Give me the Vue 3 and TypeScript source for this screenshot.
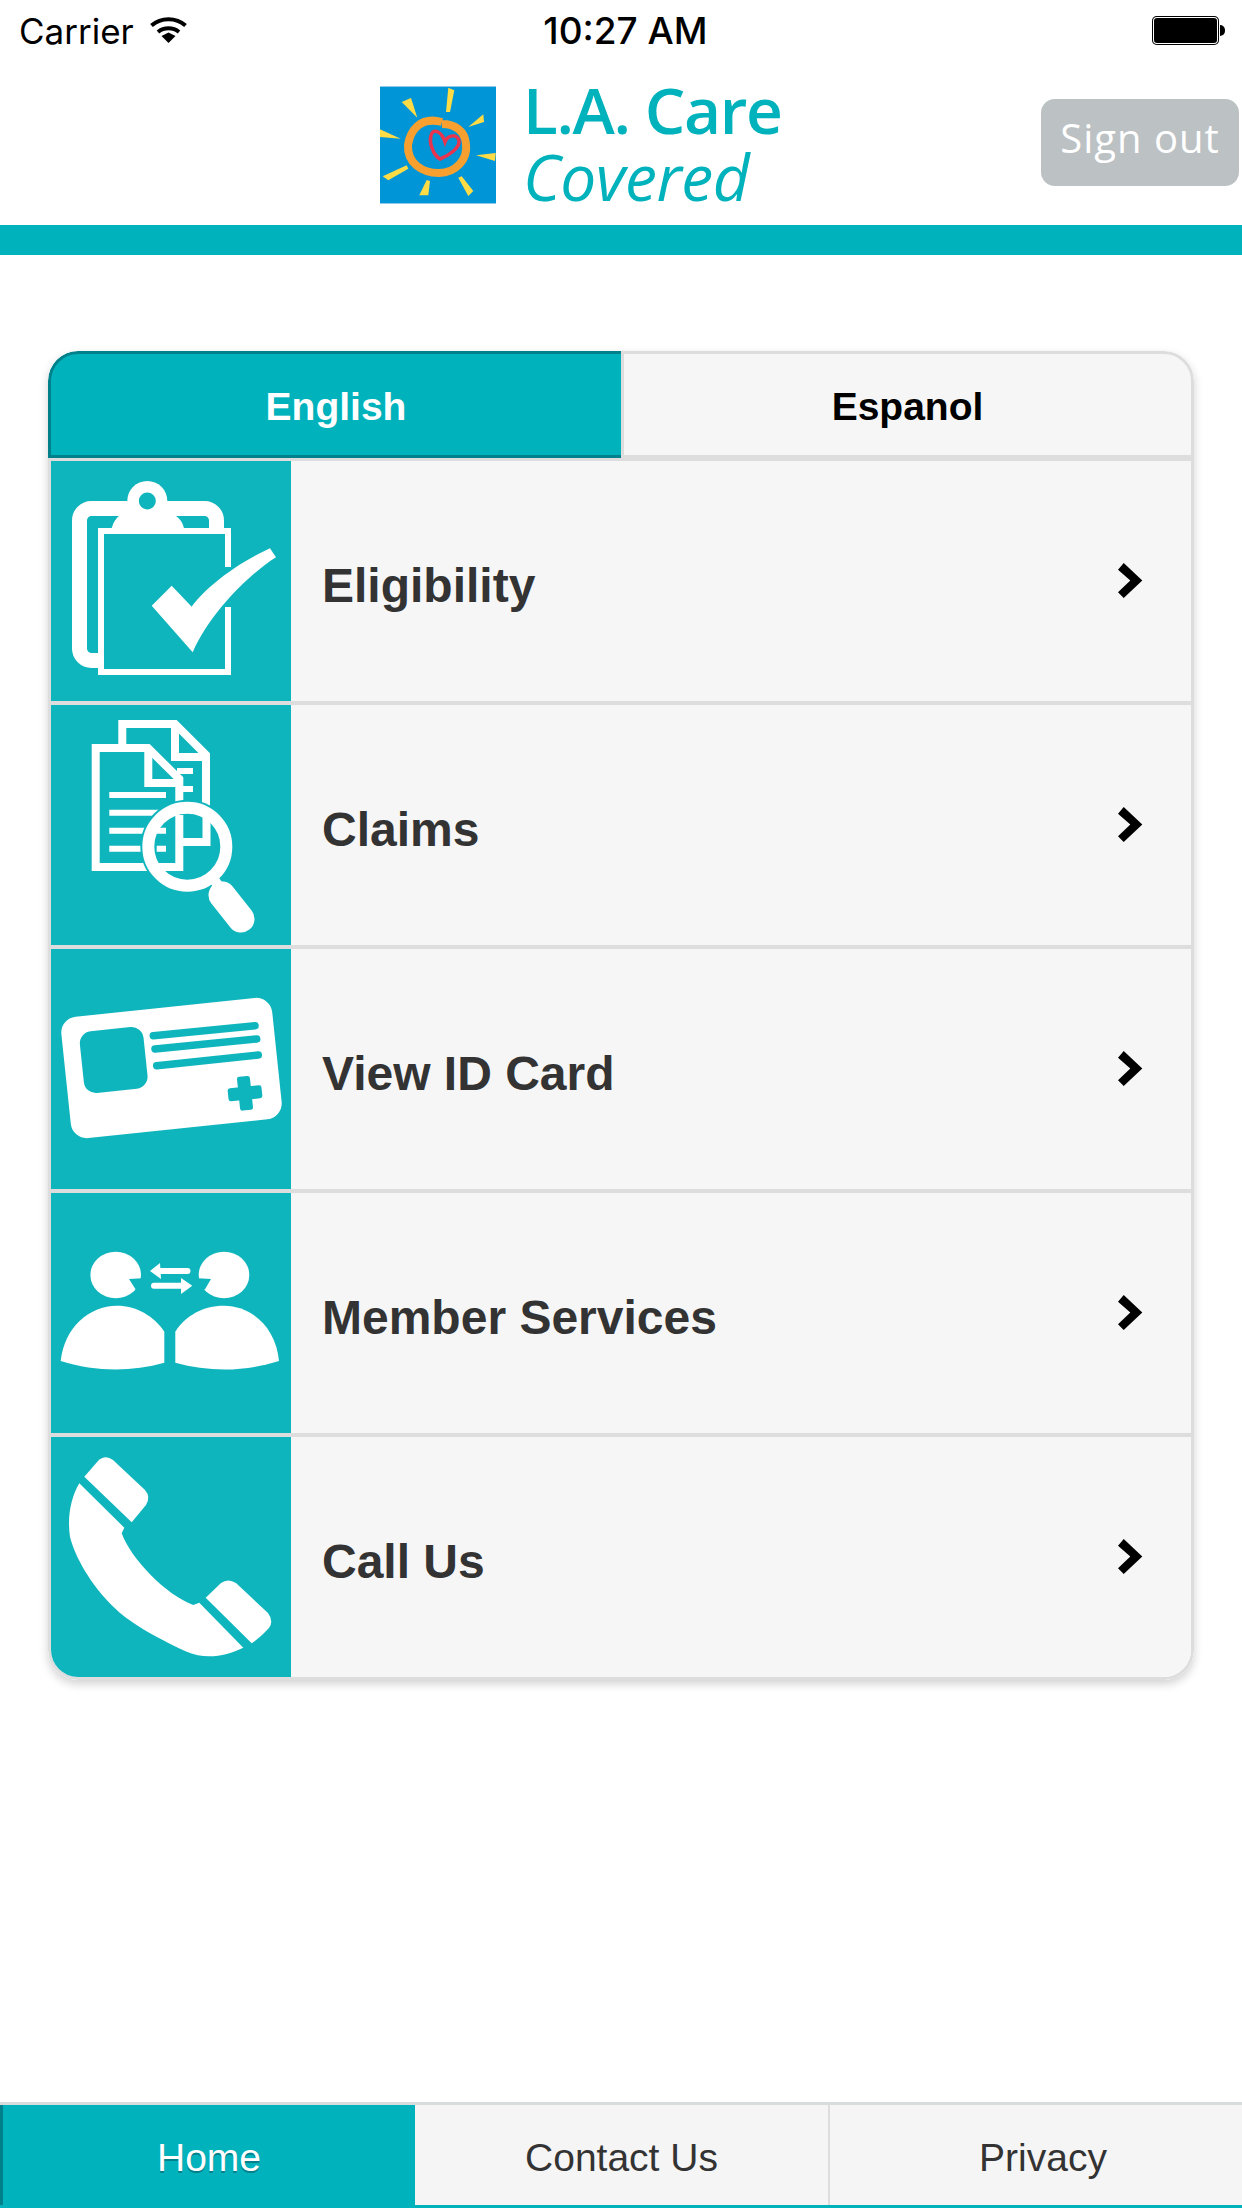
<script setup lang="ts">
interface Row { key: string; label: string }
const rows: Row[] = [
  { key: 'eligibility', label: 'Eligibility' },
  { key: 'claims', label: 'Claims' },
  { key: 'card', label: 'View ID Card' },
  { key: 'member', label: 'Member Services' },
  { key: 'call', label: 'Call Us' },
]
const rays: string[] = [
  '68.3,1.7 74.3,4.3 70,26 66,26',
  '21.7,16 31,12 37.3,31.7',
  '88.3,41 103.3,28.3 104,36',
  '0,43.3 20.7,52.7 0,51',
  '96,69.3 115.7,67 115,75',
  '2.7,90.3 26.7,79.3 28.3,82.7 8.3,94.3',
  '39.3,109.3 46.7,94 50,95 48.3,109.3',
  '78.3,91.7 81.7,90.3 93.3,105 88.3,110',
]
const tabs: string[] = ['Home', 'Contact Us', 'Privacy']
</script>

<template>
  <div class="page">
    <div class="status">
      <div class="status-left">
        <span class="carrier">Carrier</span>
        <svg class="wifi" width="37" height="26" viewBox="0 0 37 26">
          <path d="M1.5 8.5 C11 0 26 0 35.5 8.5" fill="none" stroke="#000" stroke-width="4" />
          <path d="M8 15 C14 10 23 10 29 15" fill="none" stroke="#000" stroke-width="4" />
          <polygon points="11.5,19 18.5,15.5 25.5,19 18.5,26" fill="#000" />
        </svg>
      </div>
      <span class="time">10:27 AM</span>
      <div class="status-right">
        <div class="battery"></div>
        <div class="nub"></div>
      </div>
    </div>

    <header class="header">
      <div class="logo">
        <svg class="sun" width="116" height="118" viewBox="0 0 116 118">
          <rect width="116" height="118" fill="#0095d6" />
          <rect width="116" height="1" fill="#8ccbec" />
          <rect y="117" width="116" height="1" fill="#8ccbec" />
          <polygon v-for="r in rays" :key="r" :points="r" fill="#ffdc45" />
          <path d="M62 36 C40 30 30 45 28 59 C27 77 42 87 59 87 C76 87 88 73 86 58 C85 45 75 38 62 38" fill="none" stroke="#f7a030" stroke-width="8" />
          <path d="M58 46 C50 42 49 55 52 62 C54 68 58 72 60 73 C68 70 80 62 79 55 C78 48 68 48 65 56 C63 50 60 47 58 46 Z" fill="none" stroke="#e8344f" stroke-width="3.5" />
        </svg>
        <div class="logo-text">
          <span class="la">L.A. Care</span>
          <span class="covered">Covered</span>
        </div>
      </div>
      <button class="signout">Sign out</button>
    </header>
    <div class="teal-bar"></div>

    <main class="card">
      <div class="lang">
        <div class="lang-tab active">English</div>
        <div class="lang-tab">Espanol</div>
      </div>
      <div class="list">
        <div v-for="row in rows" :key="row.key" class="row">
          <div class="icon">
            <svg width="240" height="240" viewBox="0 0 240 240">
              <g v-if="row.key === 'eligibility'">
                <rect x="28.5" y="47.5" width="137" height="152" rx="12" fill="none" stroke="#fff" stroke-width="15" />
                <circle cx="96.3" cy="40" r="20" fill="#fff" />
                <path d="M60.7 67 Q63 59 68 55 H125 Q131 59 133 67 Z" fill="#fff" />
                <circle cx="96.3" cy="40" r="8.5" fill="#0fb5bd" />
                <rect x="50" y="70" width="127" height="141" fill="#0fb5bd" stroke="#fff" stroke-width="6" />
                <rect x="172" y="106" width="12" height="40" fill="#0fb5bd" />
                <path d="M100.7 144.7 L120.7 124.7 L140.7 145.7 C152 130 180 105 219 87.3 L225 96.3 C200 112 160 150 141.7 191.3 Z" fill="#fff" />
              </g>
              <g v-else-if="row.key === 'claims'">
                <path d="M71.3 40 V19 H124 L155 50 V137 H132" fill="none" stroke="#fff" stroke-width="8" />
                <path d="M124 22 V52 H155" fill="none" stroke="#fff" stroke-width="8" />
                <path d="M126 66 H142 M132 84 H142" stroke="#fff" stroke-width="6" />
                <path d="M44.7 43 H97 L128.3 74 V162 H44.7 Z" fill="#0fb5bd" stroke="#fff" stroke-width="8" />
                <path d="M97.3 46 V78 H126" fill="none" stroke="#fff" stroke-width="8" />
                <path d="M58.3 90 H115 M58.3 107.7 H115 M58.3 125.7 H115 M58.3 143.7 H115" stroke="#fff" stroke-width="6" />
                <circle cx="136.3" cy="141.7" r="47" fill="#0fb5bd" />
                <path d="M128.3 110 V166 M108 162 H128" fill="none" stroke="#fff" stroke-width="8" />
                <path d="M155.5 110 V137 H132" fill="none" stroke="#fff" stroke-width="8" />
                <path d="M105.7 125.7 H115 M105.7 143.7 H115" stroke="#fff" stroke-width="6" />
                <circle cx="136.3" cy="141.7" r="39" fill="none" stroke="#fff" stroke-width="12" />
                <path d="M164 176 L172 187" stroke="#fff" stroke-width="10" />
                <path d="M171 190 L190 214" stroke="#fff" stroke-width="27" stroke-linecap="round" />
              </g>
              <g v-else-if="row.key === 'card'">
                <g transform="translate(120.5 119) rotate(-6)">
                  <rect x="-106" y="-61" width="212" height="122" rx="16" fill="#fff" />
                </g>
                <g transform="translate(62.7 111) rotate(-6)">
                  <rect x="-32" y="-31" width="64" height="62" rx="12" fill="#0fb5bd" />
                </g>
                <path d="M102.3 86.7 L204 76.7 M104 100 L205.7 90 M105.7 116.7 L207.3 106" stroke="#0fb5bd" stroke-width="7.5" stroke-linecap="round" />
                <g transform="translate(194 144.3) rotate(-6)" fill="#0fb5bd">
                  <rect x="-6.5" y="-17" width="13" height="34" rx="2.5" />
                  <rect x="-17" y="-6.5" width="34" height="13" rx="2.5" />
                </g>
              </g>
              <g v-else-if="row.key === 'member'">
                <ellipse cx="64.7" cy="82" rx="25.3" ry="23.3" fill="#fff" />
                <polygon points="78,86 95,85 95,100 85,97" fill="#0fb5bd" />
                <ellipse cx="173" cy="82" rx="25.3" ry="23.3" fill="#fff" />
                <polygon points="160,86 143,85 143,100 154,96.3" fill="#0fb5bd" />
                <path d="M9.7 168 C13 135 38 112.7 66 112.7 C85 112.7 103 123 113.3 138.7 V169.7 C80 179 45 179 9.7 168 Z" fill="#fff" />
                <path d="M124.3 138.7 C134 123 152 112.7 173 112.7 C201 112.7 225 135 228 168 C193 179 158 179 124.3 169.7 Z" fill="#fff" />
                <path d="M108 78 H136.5 M103 92.7 H132" stroke="#fff" stroke-width="6" stroke-linecap="round" />
                <polygon points="99,78 109,70 110,86" fill="#fff" />
                <polygon points="141.3,92.7 130,85 130,101" fill="#fff" />
              </g>
              <g v-else>
                <path d="M33.3 39.7 L47 24 Q54 17 62 23 L94 53 Q100 60 95 68 L80.7 85.3 Z" fill="#fff" />
                <path d="M154.7 160.7 L170 146 Q177 141 185 146 L217 176 Q223 184 218 191 Q210 200 200.7 206.3 Z" fill="#fff" />
                <path d="M28.3 46.3 L73.3 90.7 L70.7 96.3 C80 122 115 158 142.3 168 L148.3 165.7 L192.3 210.7 C175 219 155 223 135.7 214.7 C100 198 78 185 62.3 169.7 C40 148 24 120 19 100 C16 80 20 60 28.3 46.3 Z" fill="#fff" />
              </g>
            </svg>
          </div>
          <span class="label">{{ row.label }}</span>
          <svg class="chev" width="25" height="36" viewBox="0 0 25 36">
            <polygon points="5.7,0 24.3,17.5 5.7,35 0,29.3 12.3,17.5 0,6.7" fill="#000" />
          </svg>
        </div>
      </div>
    </main>

    <nav class="footer">
      <div v-for="(t, i) in tabs" :key="t" class="foot-tab" :class="{ on: i === 0 }">{{ t }}</div>
    </nav>
  </div>
</template>

<style>
html, body { margin: 0; background: #fff; }
</style>

<style scoped>
.page {
  width: 1242px;
  height: 2208px;
  display: flex;
  flex-direction: column;
  background: #fff;
  font-family: "Liberation Sans", Arial, sans-serif;
  overflow: hidden;
}
.status {
  height: 60px;
  display: grid;
  grid-template-columns: 1fr auto 1fr;
  align-items: center;
  padding: 2px 17px 0 19px;
  box-sizing: border-box;
  font-family: Inter, "Liberation Sans", sans-serif;
  color: #000;
}
.status-left { display: flex; align-items: center; gap: 16px; }
.carrier { font-size: 35px; line-height: 58px; }
.wifi { display: block; margin-top: -3px; }
.time { font-size: 37px; font-weight: 500; line-height: 58px; margin-left: 7px; }
.status-right { display: flex; align-items: center; justify-content: flex-end; margin-top: -2px; }
.battery {
  width: 67px;
  height: 29px;
  box-sizing: border-box;
  background: #000;
  border-radius: 5px;
  box-shadow: inset 0 0 0 1px #000, inset 0 0 0 2px #fff;
}
.nub {
  width: 5px;
  height: 11px;
  margin-left: 1px;
  background: #000;
  border-radius: 0 6px 6px 0;
}
.header {
  height: 165px;
  display: flex;
  align-items: flex-start;
  justify-content: space-between;
  padding: 0 3px 0 380px;
  box-sizing: border-box;
}
.logo { display: flex; gap: 27px; margin-top: 26px; }
.sun { display: block; }
.logo-text {
  display: flex;
  flex-direction: column;
  font-family: "Open Sans", sans-serif;
  color: #00b2bb;
}
.la {
  font-size: 64px;
  font-weight: 600;
  letter-spacing: -1.4px;
  line-height: 62px;
  margin-top: -7px;
  white-space: nowrap;
}
.covered {
  font-size: 64px;
  font-style: italic;
  letter-spacing: -0.4px;
  line-height: 66px;
  margin-top: 3px;
  white-space: nowrap;
}
.signout {
  width: 198px;
  height: 87px;
  margin-top: 39px;
  padding: 0 0 10px;
  border: none;
  border-radius: 14px;
  background: #bcc1c4;
  color: #fff;
  font-family: "Open Sans", sans-serif;
  font-size: 40px;
  letter-spacing: 1px;
}
.teal-bar { height: 30px; background: #00b2bb; flex: none; }
.card {
  margin: 96px 48px 0;
  border-radius: 30px;
  overflow: hidden;
  box-shadow: 0 4px 10px rgba(0, 0, 0, 0.18);
  flex: none;
}
.lang { display: grid; grid-template-columns: 1fr 1fr; height: 107px; }
.lang-tab {
  display: flex;
  align-items: center;
  justify-content: center;
  box-sizing: border-box;
  border: 3px solid #ddd;
  padding-top: 4px;
  background: #f6f6f6;
  color: #000;
  font-size: 39px;
  font-weight: 700;
  border-top-right-radius: 30px;
}
.lang-tab.active {
  border: 3px solid #00808a;
  border-right: none;
  background: #00b2bb;
  color: #fff;
  border-radius: 30px 0 0 0;
}
.list {
  border: 3px solid #ddd;
  border-bottom-left-radius: 30px;
  border-bottom-right-radius: 30px;
  overflow: hidden;
}
.row {
  height: 244px;
  box-sizing: border-box;
  display: flex;
  align-items: center;
  background: #f6f6f6;
  border-bottom: 4px solid #ddd;
}
.row:last-child { height: 240px; border-bottom: none; }
.icon { width: 240px; height: 240px; background: #0fb5bd; flex: none; }
.icon svg { display: block; }
.label {
  flex: 1;
  margin-left: 31px;
  padding-top: 8px;
  color: #333;
  font-size: 48px;
  font-weight: 700;
}
.chev { margin-right: 48px; flex: none; }
.footer {
  margin-top: auto;
  height: 106px;
  box-sizing: border-box;
  display: grid;
  grid-template-columns: 415px 415px 1fr;
  border-top: 3px solid #d9dcdc;
  border-bottom: 3px solid #00b2bb;
  flex: none;
}
.foot-tab {
  display: flex;
  align-items: center;
  justify-content: center;
  box-sizing: border-box;
  padding-top: 6px;
  background: #f5f5f5;
  color: #333;
  font-size: 39px;
  border-right: 2px solid #ddd;
}
.foot-tab:last-child { border-right: none; padding-left: 14px; }
.foot-tab.on {
  background: #00b2bb;
  color: #fff;
  border-left: 3px solid #00808a;
  border-right: none;
  text-shadow: 0 2px 0 #00808a;
}
</style>
